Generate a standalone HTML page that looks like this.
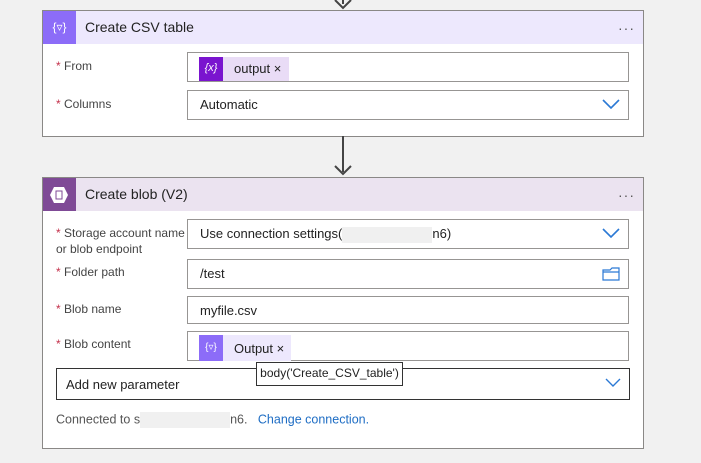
<!DOCTYPE html>
<html><head><style>
body{margin:0;width:701px;height:463px;background:#f1f1f1;font-family:"Segoe UI","Liberation Sans",sans-serif;font-size:13px;color:#222;position:relative;overflow:hidden}
.a{position:absolute}
.card{position:absolute;left:42px;width:600px;background:#fff;border:1px solid #8a8886}
.hdr{position:absolute;left:0;top:0;right:0;height:33px}
.hdr .t{position:absolute;left:42px;top:8px;font-size:14px;color:#222}
.dots{position:absolute;right:8px;top:13px;font-size:14px;color:#555;letter-spacing:1px;line-height:8px}
.lbl{position:absolute;left:13px;font-size:12px;color:#444;line-height:16px}
.lbl b{color:#c4314b;font-weight:normal}
.inp{position:absolute;left:144px;width:440px;border:1px solid #979593;background:#fff;height:28px}
.inp span.v{position:absolute;left:12px;top:6px}
.chev{position:absolute;right:8px;top:6px}
.g{display:inline-block;background:#f0f0f0;height:16px;vertical-align:middle}
</style></head><body>
<div class="a" style="left:342px;top:0;width:2px;height:4px;background:#444"></div>
<svg class="a" style="left:333px;top:0" width="20" height="10"><path d="M2 0 L10 8 L18 0" stroke="#444" stroke-width="2" fill="none"/></svg>

<div class="card" style="top:10px;height:125px">
 <div class="hdr" style="background:#ede8fd"></div>
 <div class="a" style="left:0;top:0;width:33px;height:33px;background:#8c6cf8;color:#fff;font-size:12px;text-align:center;line-height:32px">{▿}</div>
 <div class="hdr" style="background:none"><span class="t">Create CSV table</span><span class="dots">···</span></div>
 <div class="lbl" style="top:47px"><b>*</b> From</div>
 <div class="inp" style="top:41px;height:28px">
  <div class="a" style="left:11px;top:4px;width:90px;height:24px;background:#e9dcf6"></div>
  <div class="a" style="left:11px;top:4px;width:24px;height:24px;background:#7a14cf;color:#fff;font-size:11px;text-align:center;line-height:22px;font-style:italic">{x}</div>
  <span class="a" style="left:46px;top:8px">output ×</span>
 </div>
 <div class="lbl" style="top:85px"><b>*</b> Columns</div>
 <div class="inp" style="top:79px"><span class="v">Automatic</span>
 <svg class="chev" width="18" height="14"><path d="M1 3 L9 11 L17 3" stroke="#2b79d5" stroke-width="1.6" fill="none"/></svg></div>
</div>

<div class="a" style="left:342px;top:136px;width:2px;height:36px;background:#444"></div>
<svg class="a" style="left:333px;top:164px" width="20" height="12"><path d="M2 2 L10 10 L18 2" stroke="#444" stroke-width="2" fill="none"/></svg>

<div class="card" style="top:177px;height:270px">
 <div class="hdr" style="background:#ebe3f0"></div>
 <div class="a" style="left:0;top:0;width:33px;height:33px;background:#7f4a96"></div>
 <svg class="a" style="left:6px;top:7px" width="20" height="20"><polygon points="5,2 15,2 19,10 15,18 5,18 1,10" fill="#fff"/><rect x="7" y="6" width="6" height="8" fill="none" stroke="#7f4a96" stroke-width="1"/></svg>
 <div class="hdr" style="background:none"><span class="t">Create blob (V2)</span><span class="dots">···</span></div>
 <div class="lbl" style="top:47px"><b>*</b> Storage account name<br>or blob endpoint</div>
 <div class="inp" style="top:41px"><span class="v">Use connection settings(<span class="g" style="width:90px"></span>n6)</span>
 <svg class="chev" width="18" height="14"><path d="M1 3 L9 11 L17 3" stroke="#2b79d5" stroke-width="1.6" fill="none"/></svg></div>
 <div class="lbl" style="top:86px"><b>*</b> Folder path</div>
 <div class="inp" style="top:81px"><span class="v">/test</span>
 <svg class="chev" style="top:6px" width="18" height="16"><path d="M1 4 L8 4 L10 2 L17 2 L17 14 L1 14 Z M1 6 L17 6" stroke="#2b79d5" stroke-width="1.2" fill="none"/></svg></div>
 <div class="lbl" style="top:123px"><b>*</b> Blob name</div>
 <div class="inp" style="top:118px;height:26px"><span class="v">myfile.csv</span></div>
 <div class="lbl" style="top:158px"><b>*</b> Blob content</div>
 <div class="inp" style="top:153px">
  <div class="a" style="left:11px;top:3px;width:92px;height:26px;background:#ede8fd"></div>
  <div class="a" style="left:11px;top:3px;width:24px;height:26px;background:#8c6cf8;color:#fff;font-size:10px;text-align:center;line-height:25px">{▿}</div>
  <span class="a" style="left:46px;top:9px">Output ×</span>
 </div>
 <div class="a" style="left:13px;top:190px;width:572px;height:30px;border:1px solid #333"><span class="a" style="left:9px;top:8px">Add new parameter</span>
 <svg class="chev" style="top:8px" width="16" height="12"><path d="M1 2 L8 9 L15 2" stroke="#2b79d5" stroke-width="1.4" fill="none"/></svg></div>
 <div class="a" style="left:213px;top:184px;width:145px;height:22px;border:1px solid #333;background:#fff;font-size:12px;line-height:21px;text-align:center">body('Create_CSV_table')</div>
 <div class="a" style="left:13px;top:234px;font-size:12.5px;color:#555">Connected to s<span class="g" style="width:90px"></span>n6. &nbsp; <span style="color:#1e6dc4">Change connection.</span></div>
</div>
</body></html>
